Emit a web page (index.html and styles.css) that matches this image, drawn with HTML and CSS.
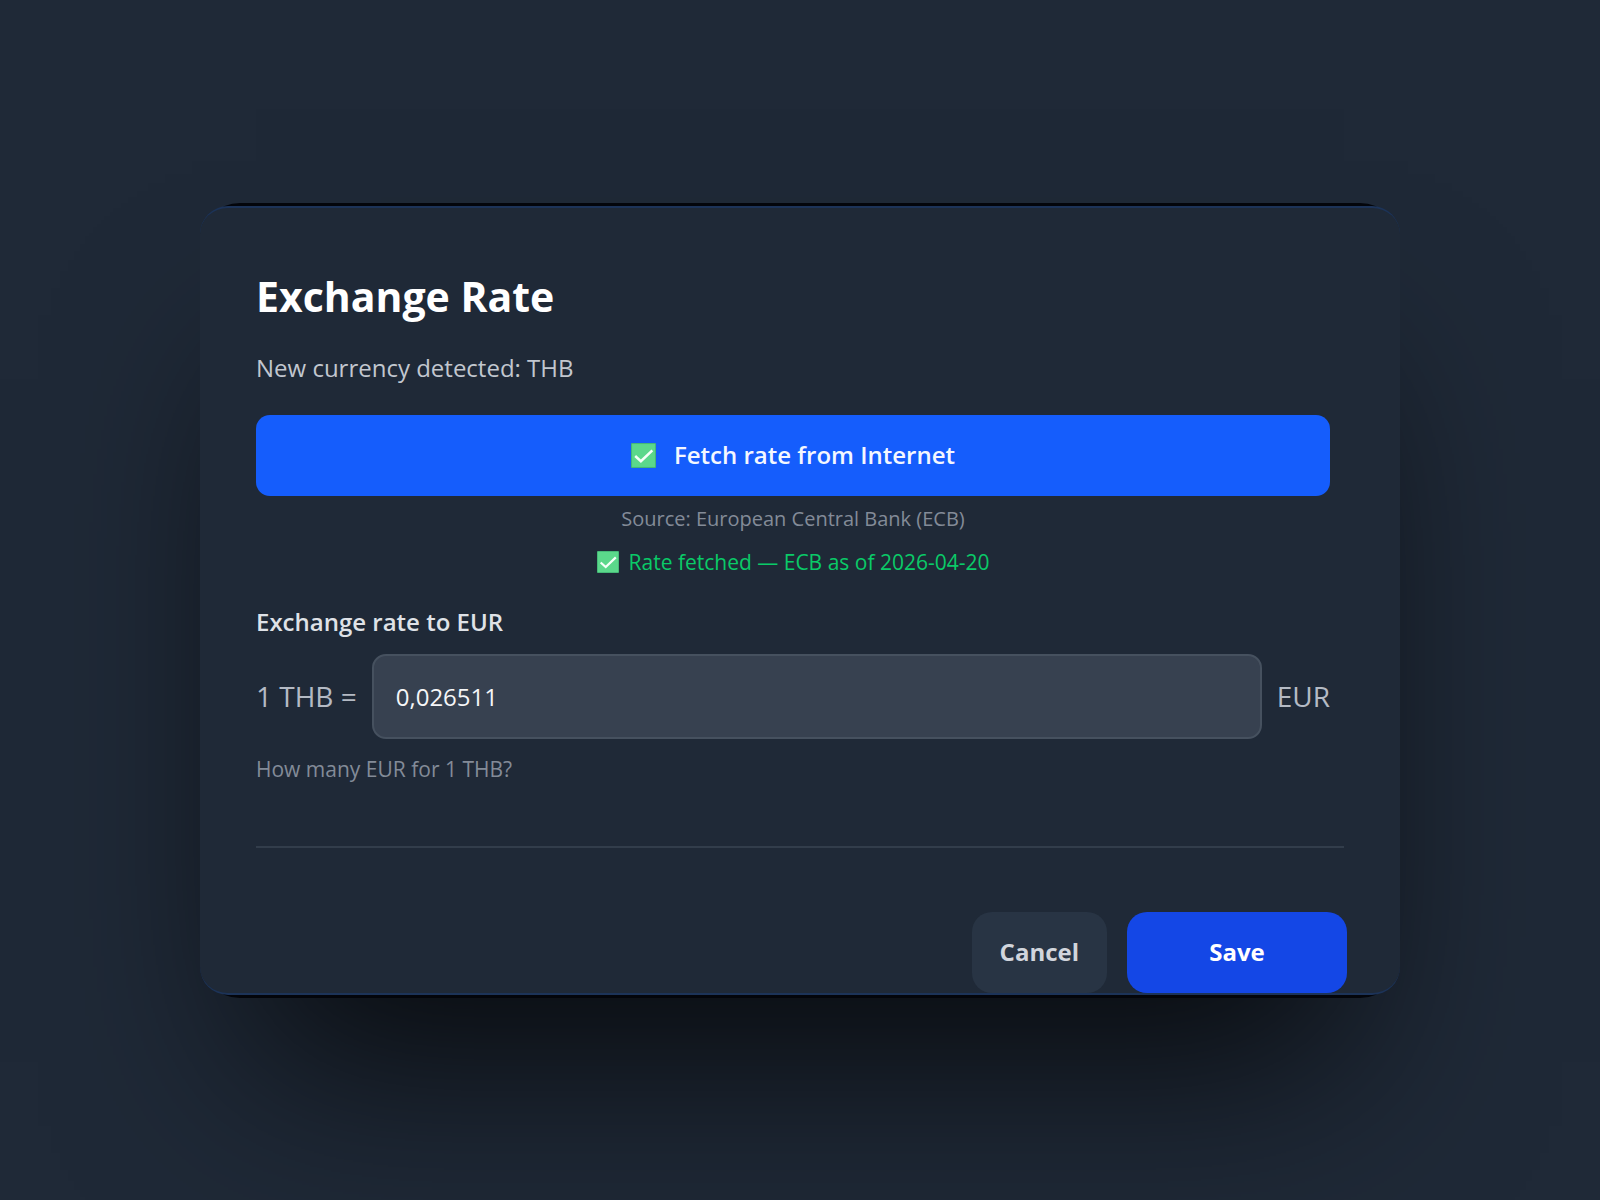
FILE: index.html
```html
<!DOCTYPE html>
<html lang="en">
<head>
    <meta charset="UTF-8">
    <meta name="viewport" content="width=device-width, initial-scale=1.0">
    <title>Exchange Rate</title>
    <link rel="stylesheet" href="styles.css">
</head>
<body>
    <div class="modal-frame">
        <form class="modal">
            <div class="modal-body">
                <h1>Exchange Rate</h1>
                <p class="intro">New currency detected: THB</p>

                <button type="button" class="fetch-button">
                    <svg class="check" viewBox="0 0 24 24" aria-hidden="true">
                        <rect width="24" height="24" rx="1" fill="#45b877"/>
                        <rect x="1" y="1" width="22" height="22" fill="#5bd88b"/>
                        <path d="M4 12.5L9.5 17.5L20.5 7" fill="none" stroke="#f4fff8" stroke-width="2.4"/>
                    </svg>
                    Fetch rate from Internet
                </button>
                <p class="source">Source: European Central Bank (ECB)</p>
                <p class="status">
                    <svg class="check check-small" viewBox="0 0 24 24" aria-hidden="true">
                        <rect width="24" height="24" rx="1" fill="#45b877"/>
                        <rect x="1" y="1" width="22" height="22" fill="#5bd88b"/>
                        <path d="M4 12.5L9.5 17.5L20.5 7" fill="none" stroke="#f4fff8" stroke-width="2.4"/>
                    </svg>
                    Rate fetched — ECB as of 2026-04-20
                </p>

                <label class="rate-label" for="rate">Exchange rate to EUR</label>
                <div class="rate-row">
                    <span>1 THB =</span>
                    <input type="text" id="rate" class="rate-input" inputmode="decimal" value="0,026511">
                    <span>EUR</span>
                </div>
                <p class="hint">How many EUR for 1 THB?</p>
            </div>

            <hr class="divider">

            <div class="actions">
                <button type="button" class="cancel-button">Cancel</button>
                <button type="submit" class="save-button">Save</button>
            </div>
        </form>
    </div>
</body>
</html>
```
FILE: styles.css
```css
* {
    box-sizing: border-box;
}

body {
    margin: 0;
    min-height: 100vh;
    display: flex;
    align-items: center;
    justify-content: center;
    background: #1f2937;
    font-family: 'Open Sans', 'Noto Sans', sans-serif;
    font-size: 24px;
    line-height: 32px;
    color: #c2c7cf;
    overflow: hidden;
}

h1,
p {
    margin: 0;
}

button,
input {
    font: inherit;
}

/* dark rim above and below the dialog */
.modal-frame {
    width: 75%;
    padding: 3px 0;
    border-radius: 40px;
    background: #03050b;
    box-shadow: 0 120px 180px -56px rgba(0, 0, 0, 0.76);
}

.modal {
    padding: 64px 53px 0 56px;
    border-top: 2px solid #1c3358;
    border-bottom: 2px solid #1c3358;
    border-radius: 28px;
    background: #1f2937;
}

.modal-body {
    padding-right: 17px;
}

h1 {
    font-size: 41px;
    line-height: 48px;
    font-weight: 700;
    color: #fff;
}

.intro {
    margin: 32px 0 31px;
}

.fetch-button {
    width: 100%;
    height: 81px;
    display: flex;
    align-items: center;
    justify-content: center;
    gap: 18px;
    border: none;
    border-radius: 14px;
    background: #155dfc;
    color: #f4f7ff;
    font-weight: 600;
    cursor: pointer;
}

.check {
    width: 25px;
    height: 25px;
    flex: none;
}

.check-small {
    width: 22px;
    height: 22px;
}

.source,
.status,
.hint {
    font-size: 21px;
    color: #838b98;
}

.source {
    margin-top: 7px;
    font-size: 20px;
    text-align: center;
}

.status {
    margin-top: 11px;
    display: flex;
    align-items: center;
    justify-content: center;
    gap: 10px;
    color: #0aca68;
}

.rate-label {
    display: block;
    margin: 28px 0 16px;
    font-weight: 600;
    color: #dfe2e7;
}

.rate-row {
    display: flex;
    align-items: center;
    gap: 15px;
    font-size: 28px;
    color: #b4bac4;
}

.rate-input {
    flex: 1;
    min-width: 0;
    height: 85px;
    padding: 0 22px;
    border: 2px solid #46515f;
    border-radius: 14px;
    background: #374150;
    color: #f5f6f8;
    font-size: 24px;
    font-weight: 500;
}

.hint {
    margin-top: 14px;
}

.divider {
    margin: 61px 3px 64px 0;
    border: none;
    border-top: 2px solid #323d4b;
}

.actions {
    display: flex;
    justify-content: flex-end;
    gap: 20px;
}

.cancel-button,
.save-button {
    height: 81px;
    border: none;
    border-radius: 20px;
    font-weight: 700;
    cursor: pointer;
}

.cancel-button {
    padding: 0 28px;
    background: #283444;
    color: #d1d5dc;
}

.save-button {
    min-width: 220px;
    background: #1447e6;
    color: #fff;
}
```
